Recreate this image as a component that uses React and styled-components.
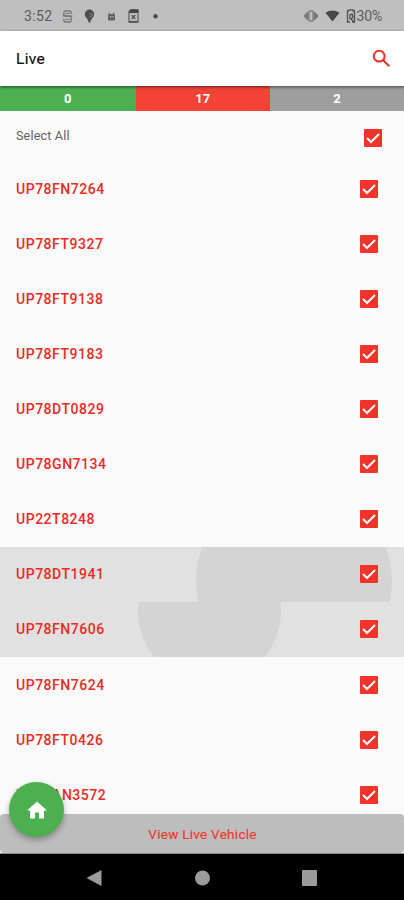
import styled, { createGlobalStyle } from "styled-components"

const GlobalStyle = createGlobalStyle`
  * {
    box-sizing: border-box;
  }
  body {
    margin: 0;
    background: #fafafa;
    font-family: Roboto, "Liberation Sans", sans-serif;
  }
`

const Screen = styled.div`
  position: relative;
  display: flex;
  flex-direction: column;
  width: 404px;
  height: 900px;
  overflow: hidden;
  background: #fafafa;
`

const StatusBar = styled.header`
  display: flex;
  flex: none;
  align-items: center;
  justify-content: space-between;
  height: 30.5px;
  padding: 2px 22px 0 24px;
  background: #bfbfbf;
  color: #5b5b5b;
  font-size: 14px;
`
const StatusGroup = styled.div`
  display: flex;
  align-items: center;
  gap: ${({ $gap }) => $gap}px;
  svg {
    display: block;
  }
`
const Clock = styled.span`
  width: 27px;
  letter-spacing: 0.35px;
`
const Battery = styled.span`
  display: flex;
  align-items: center;
  gap: 1px;
  letter-spacing: -0.2px;
`

const AppBar = styled.div`
  position: relative;
  z-index: 1;
  display: flex;
  flex: none;
  align-items: center;
  justify-content: space-between;
  height: 55.5px;
  padding: 0 13px 0 16px;
  background: #fff;
  box-shadow: 0 1px 3px rgba(0, 0, 0, 0.6);
  h1 {
    margin: 2px 0 0;
    color: #111;
    font-size: 15.5px;
    font-weight: 400;
    letter-spacing: 0.35px;
    -webkit-text-stroke: 0.2px #111;
  }
`

const Tabs = styled.div`
  display: grid;
  flex: none;
  grid-template-columns: 135.5px 134.5px 134px;
  height: 24.5px;
`
const Tab = styled.div`
  display: flex;
  align-items: center;
  justify-content: center;
  padding-top: 1px;
  background: ${({ $color }) => $color};
  color: #fff;
  font-size: 13px;
  font-weight: 700;
`

const SelectAll = styled.div`
  display: flex;
  flex: none;
  justify-content: space-between;
  height: 50.5px;
  padding: 16px 22px 0 16px;
  color: #616161;
  font-size: 12.5px;
  letter-spacing: 0.2px;
  line-height: 17px;
  svg {
    margin-top: 2.5px;
  }
`

const List = styled.div`
  flex: 1;
  min-height: 0;
  overflow: hidden;
`
const Row = styled.div`
  position: relative;
  display: flex;
  align-items: center;
  justify-content: space-between;
  height: 55.12px;
  padding: 0 25.7px 0 16px;
  overflow: hidden;
  background: ${({ $pressed }) => ($pressed ? "#e1e1e1" : "transparent")};
`
const Ripple = styled.i`
  position: absolute;
  top: ${({ $y, $r }) => $y - $r}px;
  left: ${({ $x, $r }) => $x - $r}px;
  width: ${({ $r }) => $r * 2}px;
  height: ${({ $r }) => $r * 2}px;
  border-radius: 50%;
  background: #d4d4d4;
`
const Plate = styled.span`
  position: relative;
  color: #ec2a25;
  font-size: 14px;
  font-weight: 500;
  letter-spacing: 0.52px;
`
const CheckIcon = styled.svg`
  position: relative;
  display: block;
  flex: none;
  width: 18px;
  height: 18px;
`

const ViewButton = styled.button`
  flex: none;
  height: 39px;
  padding: 1px 0 0 1px;
  border: 0;
  border-radius: 4px;
  background: #bdbdbd;
  color: #f03a30;
  font-family: inherit;
  font-size: 13.5px;
  font-weight: 400;
  letter-spacing: 0.28px;
  -webkit-text-stroke: 0.2px #f03a30;
`

const NavBar = styled.nav`
  display: flex;
  flex: none;
  align-items: center;
  justify-content: space-between;
  height: 47px;
  padding: 1px 87px 0 86px;
  border-top: 1px solid #8a8a8a;
  background: #000;
`

// floats over the last row and the button
const HomeButton = styled.button`
  position: absolute;
  top: 782px;
  left: 9px;
  display: grid;
  place-items: center;
  width: 55px;
  height: 55px;
  padding: 0;
  border: 0;
  border-radius: 50%;
  background: #4caf50;
  box-shadow: 0 3px 6px rgba(0, 0, 0, 0.3);
`

const Check = () => (
  <CheckIcon viewBox="0 0 18 18">
    <rect width="18" height="18" rx="1" fill="#f1342b" />
    <path d="M3 9 7 13 15 5" fill="none" stroke="#fff" strokeWidth="2" />
  </CheckIcon>
)

const plates = [
  { id: "UP78FN7264" },
  { id: "UP78FT9327" },
  { id: "UP78FT9138" },
  { id: "UP78FT9183" },
  { id: "UP78DT0829" },
  { id: "UP78GN7134" },
  { id: "UP22T8248" },
  { id: "UP78DT1941", ripple: { $x: 294, $y: 34, $r: 98 } },
  { id: "UP78FN7606", ripple: { $x: 209, $y: 10, $r: 71.5 } },
  { id: "UP78FN7624" },
  { id: "UP78FT0426" },
  { id: "UP78AN3572" },
]

const Status = () => (
  <StatusBar>
    <StatusGroup $gap={11}>
      <Clock>3:52</Clock>
      <svg width="11" height="13" viewBox="0 0 11 13" fill="none" stroke="#757575" strokeWidth="1.3">
        <path d="M9.2 4V3Q9.200 1 7.500 1h-4Q1.800 1 1.800 3v1.500Q1.800 6 3.500 6h4Q9.200 6 9.200 8v2Q9.200 12 7.500 12h-4Q1.800 12 1.800 10V9" />
        <path d="M.3 6h10.400M3.500 3.500h4M3.500 9.300h4" strokeWidth="1" />
      </svg>
      <svg width="11" height="14" viewBox="0 0 11 14">
        <path d="M5.500.5a4.700 4.700 0 0 1 4.700 4.700C10.200 8.500 7 9 6.300 13.500H4.700C4 9 .8 8.500.8 5.200A4.700 4.700 0 0 1 5.500.5Z" fill="#4d4d4d" />
        <path d="M5.500 5h3a3 3 0 0 1-3 3" fill="none" stroke="#888" strokeWidth="0.9" />
      </svg>
      <svg width="11" height="10" viewBox="0 0 11 10">
        <path d="M2.500 3.500h6V9h-6ZM3 1.500l1 2M8.300 1 7 3.500" fill="#606060" stroke="#606060" strokeWidth="0.9" />
        <path d="M4 5h1.300v1.500H4ZM6.500 5h1v1.500h-1Z" fill="#bbb" />
      </svg>
      <svg width="11" height="14" viewBox="0 0 11 14" fill="none" stroke="#555">
        <path d="M2.500.8h7.500v12.400H1V2.500Z" strokeWidth="1.100" />
        <path d="M2.500 1H10v2.500H1.500Z" fill="#444" stroke="#444" />
        <path d="m3.700 6 3.600 4M7.300 6l-3.600 4" strokeWidth="1.300" />
        <path d="M1 12.700h9" strokeWidth="1.500" />
      </svg>
      <svg width="11" height="5" viewBox="0 0 11 5">
        <circle cx="5.500" cy="2.300" r="2.200" fill="#4a4a4a" />
      </svg>
    </StatusGroup>
    <StatusGroup $gap={6}>
      <svg width="16" height="12" viewBox="0 0 16 12">
        <path d="M4.500 2v8L.8 6ZM11.500 2v8l3.700-4Z" fill="#777" stroke="#777" />
        <path d="M6 1.200h4v9.600H6Z" fill="none" stroke="#777" strokeWidth="1.300" />
      </svg>
      <svg width="15" height="12" viewBox="0 0 15 12">
        <path d="M.5 2.800Q7.500-2 14.500 2.800L7.500 11.500Z" fill="#484848" />
      </svg>
      <Battery>
        <svg width="10" height="14" viewBox="0 0 10 14" fill="none" stroke="#505050" strokeWidth="1.300">
          <path d="M3 2V.8h4V2h1.500v11H6M4 13H1.500V2H3" />
          <path d="M4 10.500V6l2-1 1 3-2 2 3 3" />
        </svg>
        30%
      </Battery>
    </StatusGroup>
  </StatusBar>
)

const App = () => {
  return (
    <Screen>
      <GlobalStyle />
      <Status />
      <AppBar>
        <h1>Live</h1>
        <svg width="19" height="19" viewBox="0 0 19 19" fill="none" stroke="#ee3027" strokeWidth="2">
          <circle cx="7.200" cy="7.200" r="5.400" />
          <path d="m11.200 11.200 6 6" />
        </svg>
      </AppBar>
      <Tabs>
        <Tab $color="#4caf50">0</Tab>
        <Tab $color="#f44336">17</Tab>
        <Tab $color="#9e9e9e">2</Tab>
      </Tabs>
      <SelectAll>
        Select All
        <Check />
      </SelectAll>
      <List>
        {plates.map(({ id, ripple }) => (
          <Row key={id} $pressed={!!ripple}>
            {ripple && <Ripple {...ripple} />}
            <Plate>{id}</Plate>
            <Check />
          </Row>
        ))}
      </List>
      <ViewButton>View Live Vehicle</ViewButton>
      <NavBar>
        <svg width="16" height="18" viewBox="0 0 16 18">
          <path d="M15.500 1v16L.5 9Z" fill="#9b9b9b" />
        </svg>
        <svg width="16" height="16" viewBox="0 0 16 16">
          <circle cx="8.500" cy="8" r="7.500" fill="#9b9b9b" />
        </svg>
        <svg width="15" height="16" viewBox="0 0 15 16">
          <rect width="15" height="16" rx="1" fill="#9b9b9b" />
        </svg>
      </NavBar>
      <HomeButton aria-label="Home">
        <svg width="20" height="18" viewBox="0 0 20 18">
          <path d="M10 .5 0 9.500h3V17.500h5v-6h4v6h5V9.500h3Z" fill="#fff" />
        </svg>
      </HomeButton>
    </Screen>
  )
}

export default App
